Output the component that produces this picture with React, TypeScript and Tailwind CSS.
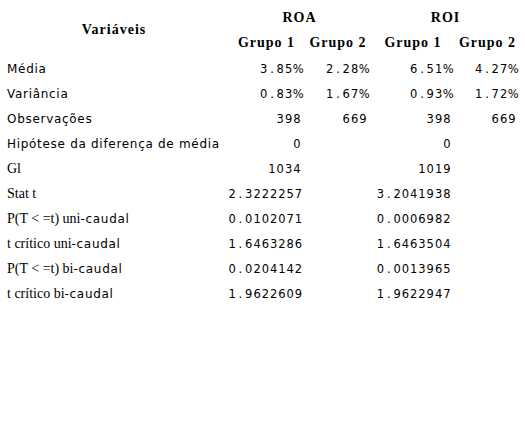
const rows: { label: React.ReactNode; v: string[] }[] = [
  { label: <Sans>Média</Sans>, v: ["3.85%", "2.28%", "6.51%", "4.27%"] },
  { label: <Sans>Variância</Sans>, v: ["0.83%", "1.67%", "0.93%", "1.72%"] },
  { label: <Sans>Observações</Sans>, v: ["398", "669", "398", "669"] },
  { label: <Sans>Hipótese da diferença de média</Sans>, v: ["0", "", "0", ""] },
  { label: <Serif>Gl</Serif>, v: ["1034", "", "1019", ""] },
  { label: <Serif>Stat t</Serif>, v: ["2.3222257", "", "3.2041938", ""] },
  {
    label: (
      <>
        <Serif>P(T &lt; =t) uni</Serif>
        <Sans>-caudal</Sans>
      </>
    ),
    v: ["0.0102071", "", "0.0006982", ""],
  },
  {
    label: (
      <>
        <Serif>t crítico uni</Serif>
        <Sans>-caudal</Sans>
      </>
    ),
    v: ["1.6463286", "", "1.6463504", ""],
  },
  {
    label: (
      <>
        <Serif>P(T &lt; =t) bi</Serif>
        <Sans>-caudal</Sans>
      </>
    ),
    v: ["0.0204142", "", "0.0013965", ""],
  },
  {
    label: (
      <>
        <Serif>t crítico bi</Serif>
        <Sans>-caudal</Sans>
      </>
    ),
    v: ["1.9622609", "", "1.9622947", ""],
  },
];

function Sans({ children }: { children: React.ReactNode }) {
  return (
    <span className="font-['DejaVu_Sans',sans-serif] text-[12px] tracking-[0.7px]">
      {children}
    </span>
  );
}

function Serif({ children }: { children: React.ReactNode }) {
  return (
    <span className="font-['Liberation_Serif',serif] text-[14px]">{children}</span>
  );
}

// every character of a number sits in the same width, the period too
function Num({ value }: { value: string }) {
  return (
    <span className="font-['DejaVu_Sans',sans-serif] text-[11.5px]">
      {value.split("").map((c, i) => (
        <span key={i} className="inline-block w-[8.3px] text-center">
          {c}
        </span>
      ))}
    </span>
  );
}

const head = "font-['Liberation_Serif',serif] font-bold text-[14px] tracking-[1px] text-center";

export default function App() {
  return (
    <div className="w-[525px] h-[427px] bg-white text-black pt-[4px]">
      <table className="table-fixed border-collapse w-[520px]">
        <colgroup>
          <col className="w-[228px]" />
          <col className="w-[77px]" />
          <col className="w-[66px]" />
          <col className="w-[84px]" />
          <col className="w-[65px]" />
        </colgroup>
        <thead>
          <tr className="h-[26px]">
            <th rowSpan={2} className={head}>
              Variáveis
            </th>
            <th colSpan={2} className={head}>
              ROA
            </th>
            <th colSpan={2} className={head}>
              ROI
            </th>
          </tr>
          <tr className="h-[24px]">
            <th className={head}>Grupo 1</th>
            <th className={head}>Grupo 2</th>
            <th className={head}>Grupo 1</th>
            <th className={head}>Grupo 2</th>
          </tr>
        </thead>
        <tbody>
          {rows.map((r, i) => (
            <tr key={i} className="h-[25px]">
              <td className="pl-[7px] whitespace-nowrap">{r.label}</td>
              {r.v.map((x, j) => (
                <td key={j} className="text-right pr-[4px] whitespace-nowrap">
                  <Num value={x} />
                </td>
              ))}
            </tr>
          ))}
        </tbody>
      </table>
    </div>
  );
}
